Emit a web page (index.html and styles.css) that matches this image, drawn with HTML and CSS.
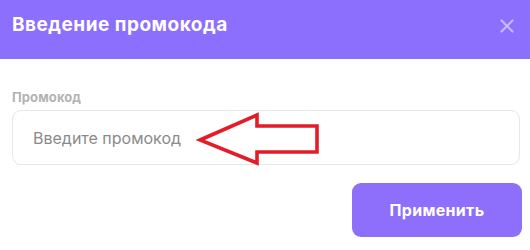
FILE: index.html
```html
<!DOCTYPE html>
<html>
<head>
<meta charset="utf-8">
<link rel="stylesheet" href="styles.css">
</head>
<body>
<div class="modal">
  <div class="header">
    <div class="title">Введение промокода</div>
    <svg class="close" width="16" height="16" viewBox="0 0 16 16"><path d="M2.5 2.5L13.5 13.5M13.5 2.5L2.5 13.5" stroke="#c8b8fd" stroke-width="2.2" stroke-linecap="round"/></svg>
  </div>
  <div class="content">
    <div class="label">Промокод</div>
    <div class="field">
      <div class="input">Введите промокод</div>
      <svg class="arrow" width="124" height="56" viewBox="0 0 124 56"><path d="M4 28L61 3V14H121V40H61V51Z" fill="none" stroke="#e21d27" stroke-width="3.6" stroke-linejoin="miter"/></svg>
    </div>
    <div class="actions"><button class="apply">Применить</button></div>
  </div>
</div>
</body>
</html>
```
FILE: styles.css
```css
* { box-sizing: border-box; }
body { margin: 0; background: #fff; font-family: Inter, "Noto Sans", sans-serif; }
.modal { width: 530px; height: 250px; }
.header {
  height: 59px; background: #8c6ffc; display: flex; align-items: center;
  justify-content: space-between; padding: 0 12px 10px 12px;
}
.title { color: #fff; font-weight: 700; font-size: 19px; letter-spacing: 0.5px; }
.close { margin-right: 3px; margin-top: 2px; }
.content { padding: 30px 10px 0 12px; }
.label { color: #b3b3b3; font-size: 13px; font-weight: 700; line-height: 16px; margin-bottom: 5px; letter-spacing: 0.1px; }
.field { position: relative; }
.input {
  height: 55px; border: 1px solid #e6e6e6; border-radius: 9px; padding: 0 20px;
  display: flex; align-items: center; font-size: 16px; color: #8a8a8a; padding-top: 1px;
}
.arrow { position: absolute; left: 184px; top: 2px; }
.actions { display: flex; justify-content: flex-end; margin-top: 18px; margin-right: -2px; }
.apply {
  width: 170px; height: 54px; background: #8d6ffb; border: none; border-radius: 9px;
  color: #fff; font-family: Inter, "Noto Sans", sans-serif; font-weight: 700; font-size: 16px; letter-spacing: 0.3px;
}
```
